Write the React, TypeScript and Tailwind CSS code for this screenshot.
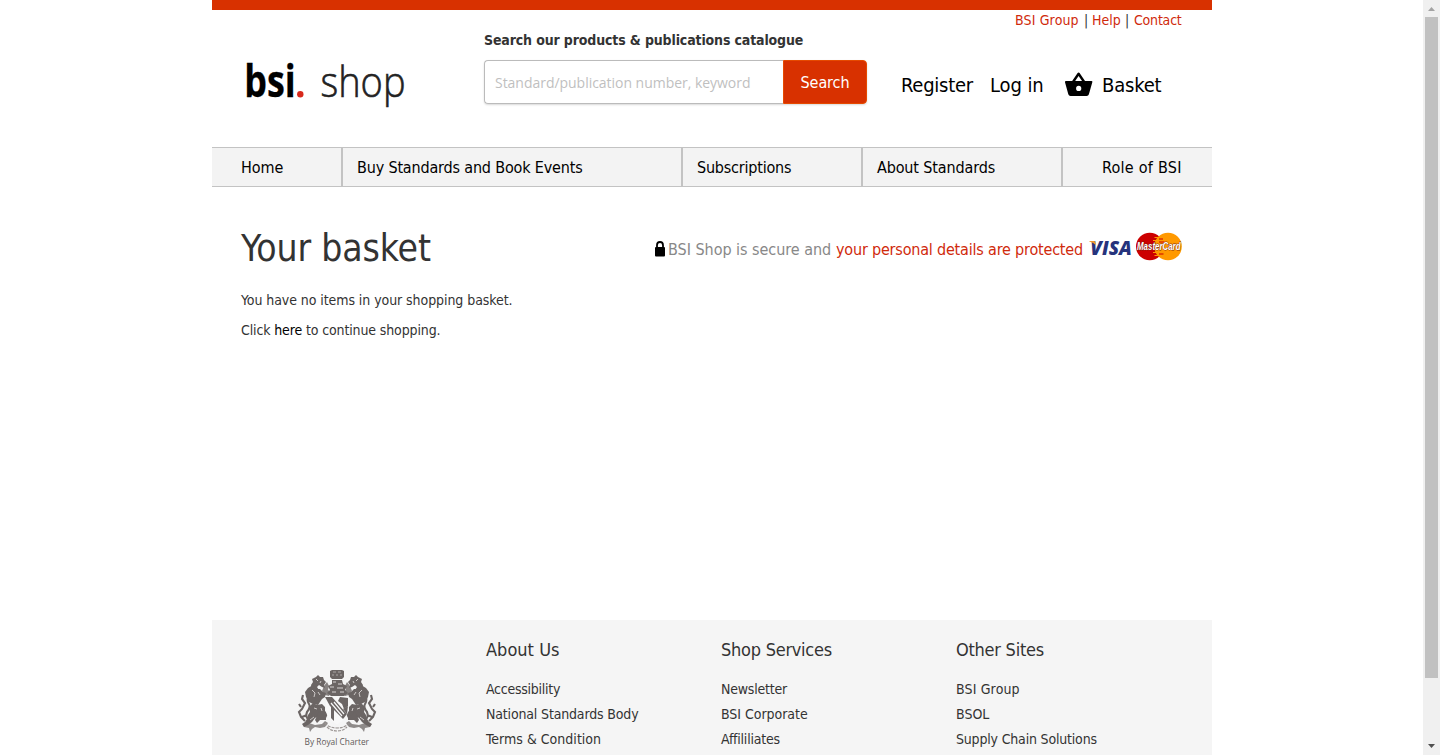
import type { ReactNode } from "react";

const navItems = [
  { label: "Home", cls: "w-[131px] pl-[29px] border-r-2 tracking-[-0.05px]" },
  { label: "Buy Standards and Book Events", cls: "w-[340px] pl-[14px] border-r-2 tracking-[-0.17px]" },
  { label: "Subscriptions", cls: "w-[180px] pl-[14px] border-r-2 tracking-[-0.2px]" },
  { label: "About Standards", cls: "w-[200px] pl-[14px] border-r-2 tracking-[-0.14px]" },
  { label: "Role of BSI", cls: "w-[149px] pl-[39px] tracking-[0.25px]" },
];

const columns = [
  {
    title: "About Us",
    cls: "tracking-[0.02px]",
    links: [
      { label: "Accessibility", cls: "tracking-[-0.26px]" },
      { label: "National Standards Body", cls: "tracking-[-0.16px]" },
      { label: "Terms & Condition", cls: "tracking-[0.02px]" },
    ],
  },
  {
    title: "Shop Services",
    cls: "tracking-[-0.25px]",
    links: [
      { label: "Newsletter", cls: "tracking-[-0.2px]" },
      { label: "BSI Corporate", cls: "tracking-[-0.03px]" },
      { label: "Affililiates", cls: "tracking-[-0.22px]" },
    ],
  },
  {
    title: "Other Sites",
    cls: "tracking-[-0.25px]",
    links: [
      { label: "BSI Group", cls: "tracking-[0.15px]" },
      { label: "BSOL", cls: "tracking-[0px]" },
      { label: "Supply Chain Solutions", cls: "tracking-[-0.18px]" },
    ],
  },
];

function Logo() {
  return (
    <svg width="180" height="80" viewBox="240 48 180 80" className="-mt-2 block overflow-visible">
      <text x="244.2" y="97" fontFamily="Open Sans, sans-serif" fontWeight="700" fontSize="44" textLength="51.5" lengthAdjust="spacingAndGlyphs" fill="#000" stroke="#000" strokeWidth=".3">
        bsi
      </text>
      <circle cx="300.3" cy="94.2" r="3.2" fill="#d8291c" />
      <text x="320.5" y="97" fontFamily="Open Sans, sans-serif" fontWeight="300" fontSize="42" textLength="85" lengthAdjust="spacingAndGlyphs" fill="#222" stroke="#222" strokeWidth=".6">
        shop
      </text>
    </svg>
  );
}

function BasketIcon() {
  return (
    <svg width="28" height="26" viewBox="1065 72 28 26" className="block">
      <path d="M1073 82 L1078.6 73.8 L1084.2 82" fill="none" stroke="#000" strokeWidth="2.4" strokeLinejoin="round" />
      <path
        fillRule="evenodd"
        d="M1066 81h25.5q1.2 0 .8 1.3l-3.4 12q-.5 1.7-2.2 1.7h-16.2q-1.7 0-2.2-1.7l-3.3-12q-.3-1.3 1-1.3zM1078.7 85.8a2.6 2.6 0 1 0 0 5.2 2.6 2.6 0 0 0 0-5.2z"
      />
    </svg>
  );
}

function LockIcon() {
  return (
    <svg width="10" height="16" viewBox="0 0 10 16" className="block">
      <path d="M2 8V4.2a3 3.2 0 0 1 6 0V8" fill="none" stroke="#000" strokeWidth="1.8" />
      <rect y="6" width="10" height="9.5" rx="1" />
    </svg>
  );
}

function CardLogos() {
  return (
    <svg width="93" height="30" viewBox="1089 232 93 30" className="block overflow-visible">
      <text
        x="1090.3"
        y="255"
        fontFamily="Open Sans, sans-serif"
        fontWeight="800"
        fontStyle="italic"
        fontSize="19.4"
        textLength="41.5"
        lengthAdjust="spacingAndGlyphs"
        fill="#26337c"
      >
        VISA
      </text>
      <path d="M1089.3 240.9h4.6q1.2 0 1.5 1.2l.6 3.2q-2.4-2.9-6.7-3.9z" fill="#f29a2e" />
      <circle cx="1149.8" cy="246.5" r="13.8" fill="#cc0000" />
      <circle cx="1168" cy="246.5" r="13.8" fill="#ff9900" />
      <path d="M1154.5 237.5h5M1153 240.5h6M1153 252.5h6M1154.5 255.5h5" stroke="#ff9900" strokeWidth="1.2" />
      <path d="M1159 239h4M1159 242h5.5M1159 254h4.5" stroke="#cc0000" strokeWidth="1.2" />
      <text
        x="1137"
        y="249.8"
        fontFamily="Liberation Sans, sans-serif"
        fontWeight="700"
        fontStyle="italic"
        fontSize="10"
        textLength="43.5"
        lengthAdjust="spacingAndGlyphs"
        fill="#fff"
        stroke="#7a2410"
        strokeWidth=".8"
        paintOrder="stroke"
      >
        MasterCard
      </text>
    </svg>
  );
}

function Supporter() {
  return (
    <g>
      <path d="M312 679l4-2 2-2 2 2 3 0 1 3 2 2-2 3 1 3-3-1-3-2-2 2 2 3-3 3-4-3-1-5 2-3z" />
      <path d="M308 688l5-3 4 4 3 0 3 3 3 1-1 4-3 2-4 6-5-1-4-2-3-5-1-5z" />
      <path d="M313 703l4 2 5-1 3 3 0 4 3 3-2 4-5 1-2-3-4 2-3 4-4 3-4 2-2-3 3-2 2-3 1-4 2-3-1-5z" />
      <path d="M319 711l3 4 4 1 0 4-6 0-3 3-2-3z" />
      <path
        d="M308 697q-1 4 1 7t-2 8q-2 5 2 8M303 695l-1 4 3 4-3 6-3 3 2 5 4 4M299 704l2 3M302 717l5-2"
        fill="none"
        stroke="#6b6564"
        strokeWidth="2.1"
      />
      <path d="M303 724l6-1 6 2 7-1 3-3 3 2-3 4-5 1-5-1-3 2-2 3-1-4-5-1z" opacity=".75" />
      <path d="M316 679l2 2M321 681l-1 2M312 690l3 3-1 4M318 692l2 3M314 708l3 1M321 708l1 3M310 720l4-3" fill="none" stroke="#d8d4d3" strokeWidth=".9" />
      <path d="M324 686l3-4 2 4-1 4 3 2-2 4-4-1-3-4z" opacity=".8" />
    </g>
  );
}

function Crest() {
  return (
    <svg width="82" height="66" viewBox="296 668 82 66" className="block overflow-visible" fill="#6b6564">
      <Supporter />
      <g transform="translate(674 0) scale(-1 1)">
        <Supporter />
      </g>
      <path d="M330 671l2-1h10l2 1v6l-2 2h-10l-2-2z" />
      <path d="M333 672h3M338 672h3M332 675h2M336 675h2M340 675h2" stroke="#aaa5a3" strokeWidth="1" />
      <path d="M332 680h10l1 4 4 2-2 4 3 3-4 3h-13l-4-3 3-3-2-4 4-2z" />
      <path d="M333 682h3M338 684h4M330 687h4M337 688h6M332 692h4M340 692h4" stroke="#d8d4d3" strokeWidth="1" />
      <path d="M326 697h22v15q-2 8-11 12-9-4-11-12z" fill="#f8f8f8" />
      <path d="M325 697h7l15 17-4 5-13-13z" />
      <path d="M331 703l11 13M334 702l10 12" stroke="#f8f8f8" strokeWidth="1.2" />
      <path d="M331 706l3 3v12l-3-3zM340 697l8 1v8l-4 3-2-5-4-3z" />
      <path d="M348 706l-1 8-4-5z" />
      <path d="M325 723q4 5 12 5t12-5M327 727q4 4 10 4t10-4" fill="none" stroke="#9b9593" strokeWidth="1.2" strokeDasharray="3 1" />
    </svg>
  );
}

function Link({ children, className = "" }: { children: ReactNode; className?: string }) {
  return (
    <a href="#" className={className}>
      {children}
    </a>
  );
}

export default function App() {
  return (
    <div className="flex h-[755px] overflow-hidden bg-white font-['DejaVu_Sans_Condensed','DejaVu_Sans',sans-serif] text-sm text-[#333]">
      <div className="ml-[212px] flex w-[1000px] flex-col">
        <header className="flex h-[147px] items-start border-t-10 border-[#d83100]">
          <div className="mt-[46px] ml-[28px] w-[170px]">
            <Logo />
          </div>
          <div className="mt-[20px] ml-[74px] w-[383px]">
            <label className="block text-sm leading-5 font-bold tracking-[-0.14px] whitespace-nowrap">Search our products &amp; publications catalogue</label>
            <div className="mt-[10px] flex h-11 rounded shadow-[0_1px_2px_rgba(0,0,0,0.15)]">
              <input
                className="w-[299px] rounded-l border border-r-0 border-[#bbb] bg-white px-[10px] pt-[2px] font-['Open_Sans',sans-serif] text-sm tracking-[-0.03px] outline-none placeholder:text-[#bfbfbf]"
                placeholder="Standard/publication number, keyword"
              />
              <button className="w-[84px] rounded-r border border-[#e64a00] bg-[#d83100] pt-[2px] text-base tracking-[-0.1px] text-white">Search</button>
            </div>
          </div>
          <div className="ml-[34px] flex w-[281px] flex-col">
            <div className="flex h-5 justify-end leading-5 whitespace-nowrap text-[#d02a0c]">
              <Link className="w-[69px] tracking-[0.15px]">BSI Group</Link>
              <span className="w-[8px] text-[#333]">|</span>
              <Link className="w-[33px]">Help</Link>
              <span className="w-[9px] text-[#333]">|</span>
              <Link className="w-[48px] tracking-[-0.2px]">Contact</Link>
            </div>
            <div className="mt-[40px] flex h-[30px] items-center text-xl text-black">
              <Link className="w-[89px] tracking-[-0.25px]">Register</Link>
              <Link className="w-[75px] tracking-[-0.1px]">Log in</Link>
              <BasketIcon />
              <Link className="ml-[9px] tracking-[-0.2px]">Basket</Link>
            </div>
          </div>
        </header>

        <nav className="flex h-10 border-y border-[#c3c3c3] bg-[#f3f3f3] text-base text-black">
          {navItems.map((n) => (
            <a key={n.label} href="#" className={`flex items-center border-[#c3c3c3] pt-[2px] whitespace-nowrap ${n.cls}`}>
              {n.label}
            </a>
          ))}
        </nav>

        <main className="h-[433px] pr-[30px] pl-[29px]">
          <div className="mt-[37px] flex h-[48px] justify-between">
            <h1 className="pt-px text-[37px] leading-12 tracking-[-0.15px] whitespace-nowrap">Your basket</h1>
            <div className="flex h-[48px] items-center text-base whitespace-nowrap text-[#888]">
              <div className="mt-[2px]">
                <LockIcon />
              </div>
              <span className="mt-[4px] ml-[3px] w-[168px] tracking-[-0.03px]">BSI Shop is secure and</span>
              <Link className="mt-[4px] w-[253px] tracking-[-0.19px] text-[#d02a0c]">your personal details are protected</Link>
              <div className="-mt-[2px]">
                <CardLogos />
              </div>
            </div>
          </div>
          <p className="mt-[18px] leading-5 tracking-[-0.07px]">You have no items in your shopping basket.</p>
          <p className="mt-[10px] leading-5 tracking-[-0.13px]">
            Click <Link className="text-black">here</Link> to continue shopping.
          </p>
        </main>

        <footer className="flex h-[135px] bg-[#f5f5f5]">
          <div className="flex w-[274px] flex-col items-start pt-[48px] pl-[84px]">
            <Crest />
            <svg width="72" height="16" viewBox="0 0 72 16" className="ml-[7px] block overflow-visible">
              <text x="1.5" y="10.5" fontFamily="Open Sans, sans-serif" fontSize="8.6" textLength="64.5" lengthAdjust="spacingAndGlyphs" fill="#5f5a59">
                By Royal Charter
              </text>
            </svg>
          </div>
          {columns.map((c) => (
            <section key={c.title} className="w-[235px] pt-[20px]">
              <h2 className={`text-lg leading-5 ${c.cls}`}>{c.title}</h2>
              <ul className="mt-[17px]">
                {c.links.map((l) => (
                  <li key={l.label} className={`h-[25px] leading-[25px] whitespace-nowrap ${l.cls}`}>
                    {l.label}
                  </li>
                ))}
              </ul>
            </section>
          ))}
        </footer>
      </div>

      <div className="ml-auto flex w-[17px] flex-col items-center bg-[#f0f0f0]">
        <svg width="17" height="17" viewBox="0 0 17 17" className="block">
          <path d="M5 11h7L8.5 7z" fill="#a3a3a3" />
        </svg>
        <div className="h-[661px] w-[13px] bg-[#c1c1c1]" />
        <svg width="17" height="17" viewBox="0 0 17 17" className="mt-auto block">
          <path d="M5 6h7l-3.5 4z" fill="#505050" />
        </svg>
      </div>
    </div>
  );
}
